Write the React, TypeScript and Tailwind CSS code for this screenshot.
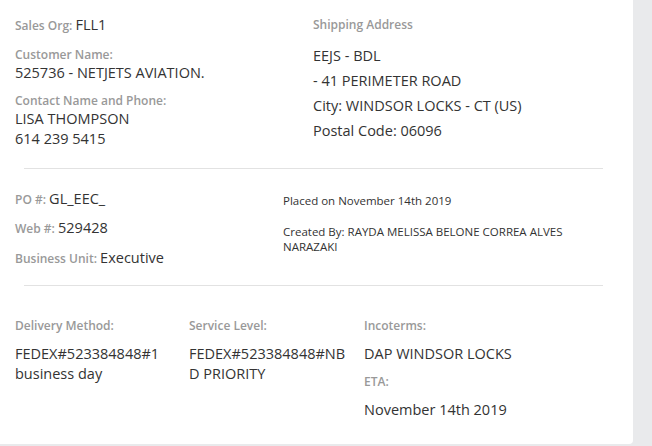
import React from "react";

const font = { fontFamily: '"Open Sans", "Noto Sans", sans-serif' };

export default function App() {
  return (
    <div className="w-[652px] h-[446px] bg-[#e9eaec] flex overflow-hidden" style={font}>
      <div className="w-[633px] h-[444px] bg-white rounded-br-[4px] flex flex-col text-[#333]">
        {/* Section 1 */}
        <div className="flex pt-[16px] h-[168px]">
          <div className="w-[298px] pl-[15px]">
            <div className="text-[12px] leading-[18px] font-semibold text-[#999]">
              Sales Org: <span className="text-[14.5px] font-normal text-[#333]">FLL1</span>
            </div>
            <div className="mt-[12px] text-[12px] leading-[16px] font-semibold text-[#999]">Customer Name:</div>
            <div className="text-[14.5px] leading-[20px]">525736 - NETJETS AVIATION.</div>
            <div className="mt-[10px] text-[12px] leading-[16px] font-semibold text-[#999]">Contact Name and Phone:</div>
            <div className="text-[14.5px] leading-[20px]">LISA THOMPSON</div>
            <div className="text-[14.5px] leading-[20px]">614 239 5415</div>
          </div>
          <div className="pl-[15px]">
            <div className="text-[12px] leading-[18px] font-semibold text-[#999]">Shipping Address</div>
            <div className="mt-[9px] text-[14.5px] leading-[25px]">
              <div>EEJS - BDL</div>
              <div>- 41 PERIMETER ROAD</div>
              <div>City: WINDSOR LOCKS - CT (US)</div>
              <div>Postal Code: 06096</div>
            </div>
          </div>
        </div>
        <div className="mx-[24px] w-[579px] h-px bg-[#e2e2e2]" />
        {/* Section 2 */}
        <div className="flex h-[116px] pt-[19px]">
          <div className="w-[283px] pl-[15px]">
            <div className="text-[12px] leading-[22px] font-semibold text-[#999]">
              PO #: <span className="text-[14.5px] font-normal text-[#333]">GL_EEC_</span>
            </div>
            <div className="mt-[6px] text-[12px] leading-[22px] font-semibold text-[#999]">
              Web #: <span className="text-[14.5px] font-normal text-[#333]">529428</span>
            </div>
            <div className="mt-[7px] text-[12px] leading-[22px] font-semibold text-[#999]">
              Business Unit: <span className="text-[14.5px] font-normal text-[#333]">Executive</span>
            </div>
          </div>
          <div className="w-[300px] text-[11.5px] leading-[15px] pt-[5px]">
            <div>Placed on November 14th 2019</div>
            <div className="mt-[16px]">Created By: RAYDA MELISSA BELONE CORREA ALVES NARAZAKI</div>
          </div>
        </div>
        <div className="mx-[24px] w-[579px] h-px bg-[#e2e2e2]" />
        {/* Section 3 */}
        <div className="flex pt-[31px] pl-[15px]">
          <div className="w-[174px] pr-[15px]">
            <div className="text-[12px] leading-[18px] font-semibold text-[#999]">Delivery Method:</div>
            <div className="mt-[9px] text-[14.5px] leading-[20px] break-words">FEDEX#523384848#1 business day</div>
          </div>
          <div className="w-[175px] pr-[15px]">
            <div className="text-[12px] leading-[18px] font-semibold text-[#999]">Service Level:</div>
            <div className="mt-[9px] text-[14.5px] leading-[20px] break-words">FEDEX#523384848#NBD PRIORITY</div>
          </div>
          <div className="w-[200px]">
            <div className="text-[12px] leading-[18px] font-semibold text-[#999]">Incoterms:</div>
            <div className="mt-[9px] text-[14.5px] leading-[20px]">DAP WINDSOR LOCKS</div>
            <div className="mt-[9px] text-[12px] leading-[18px] font-semibold text-[#999]">ETA:</div>
            <div className="mt-[9px] text-[14.5px] leading-[20px]">November 14th 2019</div>
          </div>
        </div>
      </div>
    </div>
  );
}
